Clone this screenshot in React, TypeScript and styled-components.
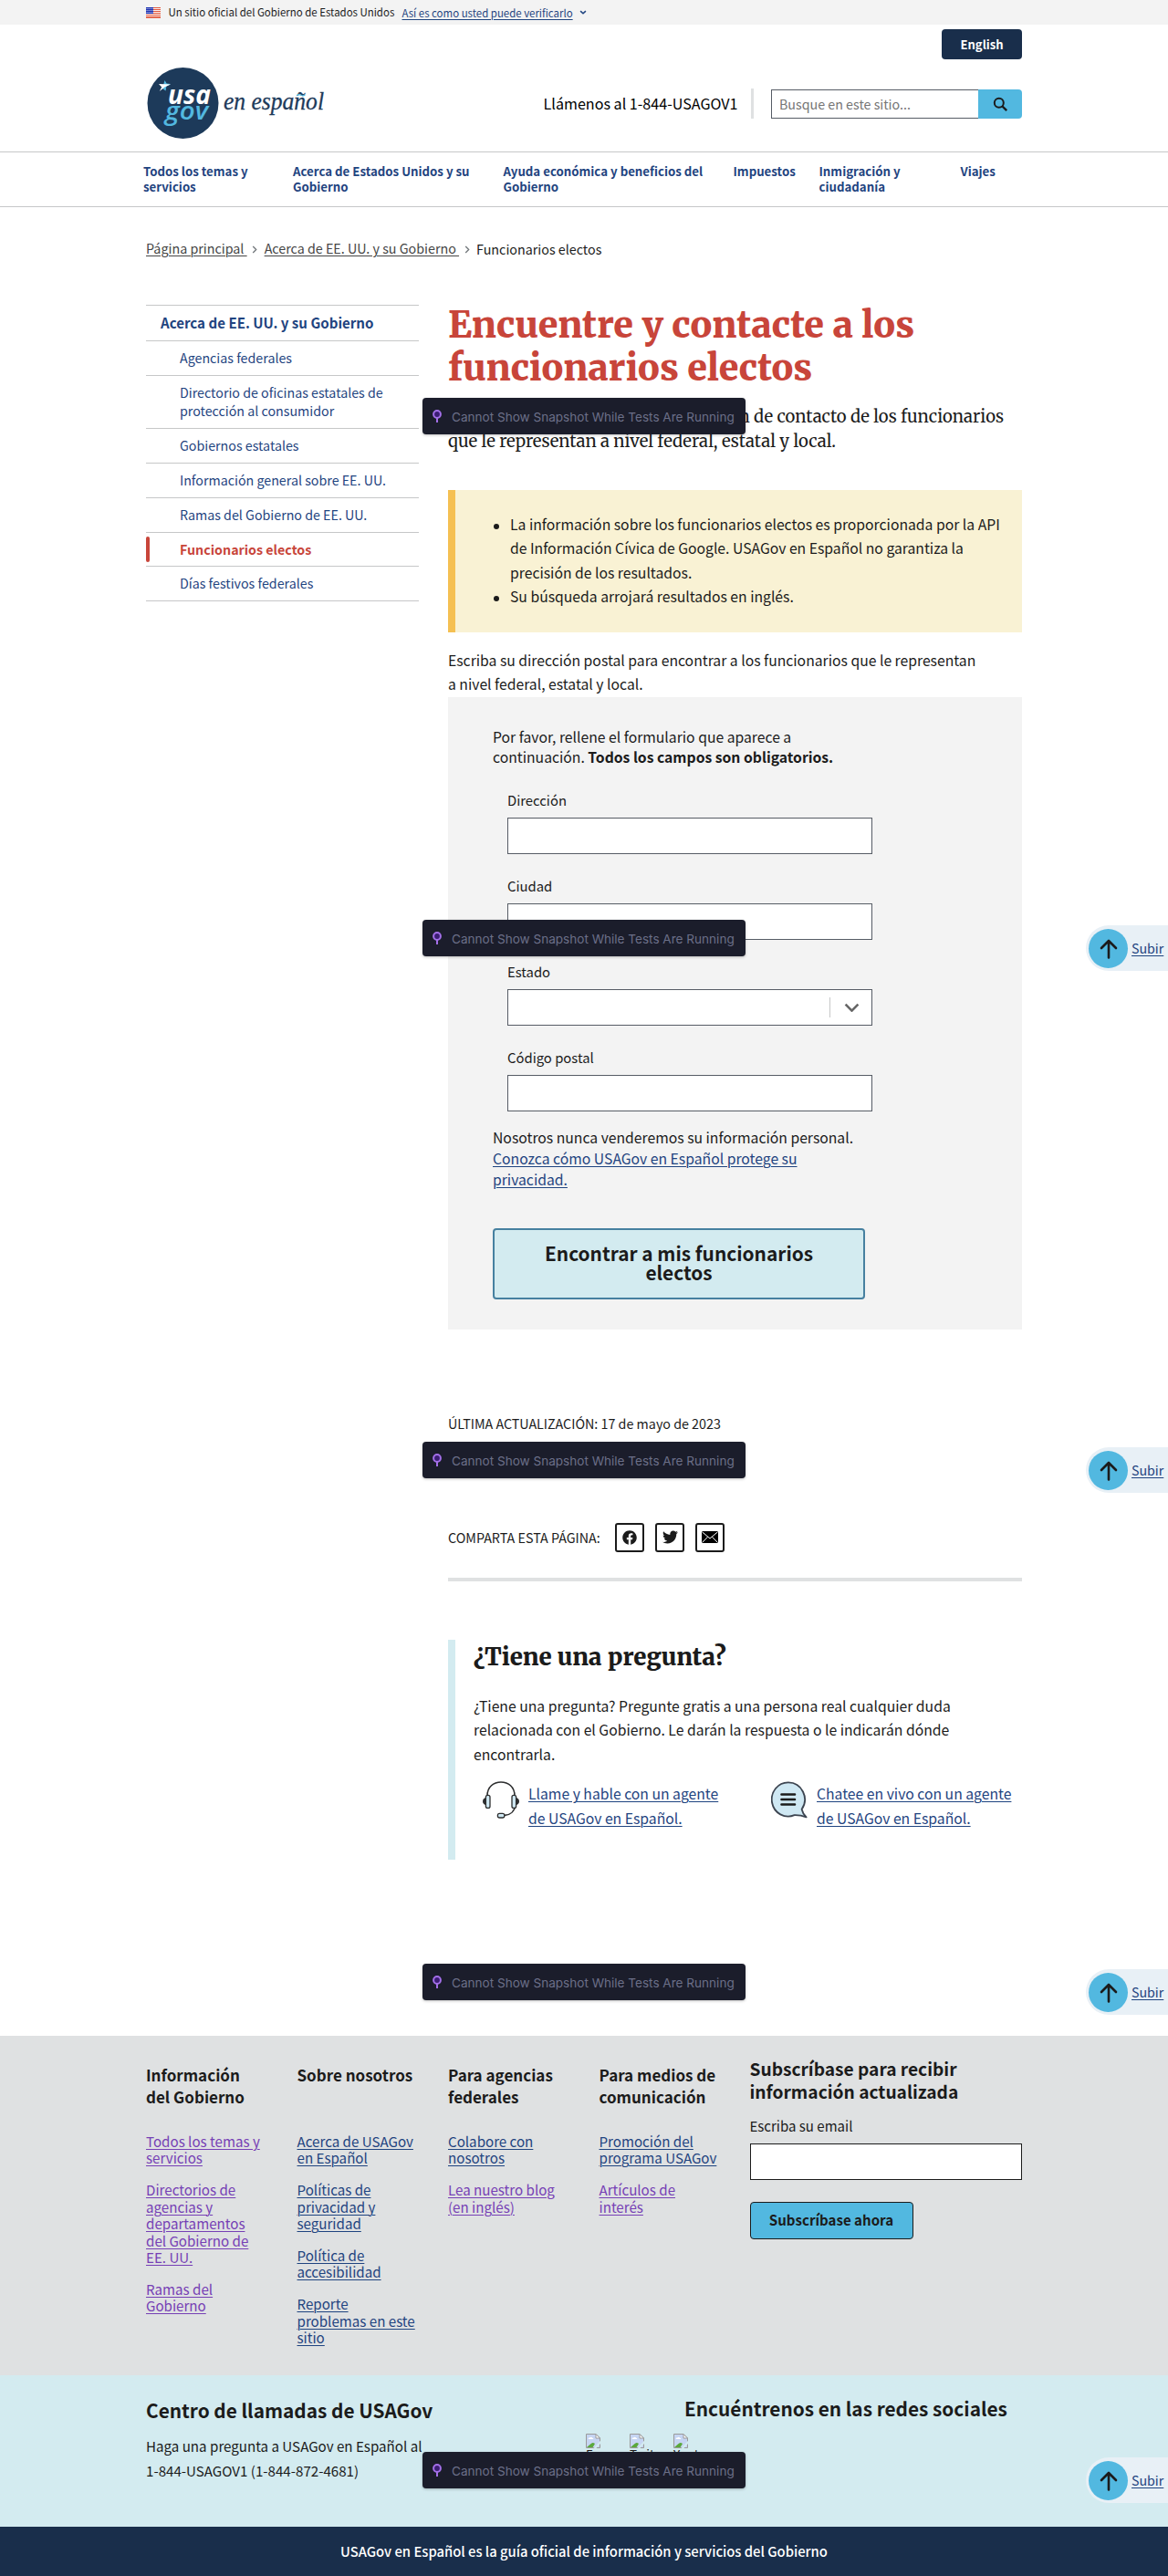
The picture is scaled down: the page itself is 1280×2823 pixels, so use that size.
import React from "react";
import styled, { createGlobalStyle, css } from "styled-components";
import { FaFacebook, FaTwitter } from "react-icons/fa";

const sans = `"Noto Sans CJK JP", "Noto Sans", sans-serif`;
const serif = `Merriweather, "DejaVu Serif Condensed", "DejaVu Serif", serif`;

const c = {
  ink: "#1b1b1b",
  link: "#1f4480",
  visited: "#7640b5",
  red: "#c8453a",
  navy: "#192e4b",
  cyan: "#52b8e0",
  teal: "#d3ebf0",
  line: "#c6c7c8",
  grey: "#dfe1e2",
  light: "#f3f3f3",
};

const GlobalStyle = createGlobalStyle`
  *, *::before, *::after { box-sizing: border-box; }
  body { margin: 0; background: #fff; color: ${c.ink}; font-family: ${sans}; font-size: 15.72px; line-height: 26.35px; }
  h1, h2, h3, p, ul { margin: 0; padding: 0; font-size: inherit; }
  a { color: ${c.link}; text-decoration-thickness: 1px; text-underline-offset: 2px; }
  svg { display: block; flex: none; }
`;

const Page = styled.div`
  position: relative;
  width: 1280px;
  height: 2823px;
  overflow: hidden;
`;

const Container = styled.div`
  width: 960px;
  margin: 0 auto;
`;

/* ---------- Banner ---------- */
const Banner = styled.div`
  height: 27px;
  background: ${c.light};
`;
const BannerInner = styled(Container)`
  display: flex;
  align-items: center;
  height: 27px;
  font-size: 11.45px;
  line-height: 26px;
  white-space: nowrap;
`;
const BannerText = styled.span`
  width: 248px;
  margin: 0 8px 1px 8.5px;
`;
const BannerLink = styled.a`
  margin: 1px 7px 0 0;
`;

/* ---------- Header ---------- */
const Header = styled.header`
  border-bottom: 1px solid ${c.line};
  height: 140px;
`;
const TopRow = styled(Container)`
  display: flex;
  justify-content: flex-end;
  padding-top: 5px;
`;
const LanguageButton = styled.a`
  width: 88px;
  height: 33px;
  border-radius: 4px;
  background: ${c.navy};
  color: #fff;
  font-weight: 700;
  font-size: 13.03px;
  line-height: 33px;
  text-align: center;
  text-decoration: none;
`;
const BrandRow = styled(Container)`
  display: flex;
  align-items: center;
  height: 96px;
`;
const Phone = styled.span`
  margin: 0 14.5px 0 auto;
  color: #000;
  font-size: 16.12px;
  line-height: 30px;
`;
const Divider = styled.span`
  width: 3px;
  height: 33px;
  margin-right: 19px;
  background: ${c.grey};
`;
const SearchField = styled.div`
  width: 227px;
  height: 32px;
  padding-left: 8px;
  margin-top: 2px;
  border: 1px solid #565c65;
  border-right: 0;
  color: #757575;
  font-size: 14.27px;
  line-height: 30px;
`;
const SearchButton = styled.div`
  display: flex;
  align-items: center;
  justify-content: center;
  width: 48px;
  height: 32px;
  margin-top: 2px;
  border-radius: 0 4px 4px 0;
  background: ${c.cyan};
`;

const Nav = styled.nav`
  display: grid;
  grid-template-columns: 164px 230.5px 252px 94px 155px 120px;
  height: 60px;
  padding: 12px 0 0 157px;
  border-bottom: 1px solid ${c.line};
`;
const NavLink = styled.a<{ $width: number }>`
  width: ${(p) => p.$width}px;
  font-size: 13.25px;
  line-height: 17px;
  font-weight: 700;
  text-decoration: none;
`;

const Crumbs = styled(Container)`
  display: flex;
  align-items: center;
  height: 24px;
  margin-top: 33px;
  font-size: 14.31px;
  line-height: 24px;
  white-space: pre;
`;
const CrumbLink = styled.a`
  color: #454545;
`;
const CrumbHere = styled.span`
  padding-top: 1px;
`;
const CrumbSep = styled.svg`
  margin: 2px 7px 0 5.5px;
`;

/* ---------- Body ---------- */
const Columns = styled(Container)`
  display: grid;
  grid-template-columns: 299px 629px;
  column-gap: 32px;
  align-items: start;
  height: 1947px;
`;

const SideNav = styled.ul`
  margin-top: 50px;
  list-style: none;
  border-bottom: 1px solid ${c.line};
`;
const SideItem = styled.li<{ $kind?: "head" | "active" }>`
  position: relative;
  padding: 8px 30px 9px 37px;
  border-top: 1px solid ${c.line};
  color: ${c.link};
  font-size: 14.26px;
  line-height: 20px;
  ${(p) =>
    p.$kind === "head" &&
    css`
      padding: 8px 0 10px 16px;
      font-size: 15.1px;
      font-weight: 700;
    `}
  ${(p) =>
    p.$kind === "active" &&
    css`
      padding: 8px 0 8px 37px;
      color: ${c.red};
      font-weight: 700;
      &::before {
        content: "";
        position: absolute;
        left: 0;
        top: 4px;
        width: 4px;
        height: 28px;
        border-radius: 2px;
        background: ${c.red};
      }
    `}
`;

const Main = styled.main`
  padding-top: 48.7px;
`;
const Title = styled.h1`
  color: ${c.red};
  font: 900 39.35px/47px ${serif};
  white-space: nowrap;
`;
const Intro = styled.p`
  width: 609px;
  margin-top: 16.5px;
  font: 400 18.48px/27px ${serif};
  white-space: nowrap;
`;
const IntroFirst = styled.span`
  display: flex;
  justify-content: flex-end;
`;
const Alert = styled.div`
  height: 156px;
  margin-top: 39.8px;
  padding: 25px 16px 0 60px;
  border-left: 8px solid #f5c052;
  background: #f9f2d4;
`;
const AlertList = styled.ul`
  padding-left: 0;
  list-style: none;
`;
const AlertItem = styled.li`
  display: flex;
  &::before {
    content: "";
    flex: none;
    width: 6px;
    height: 6px;
    margin: 12px 12px 0 -18px;
    border-radius: 50%;
    background: ${c.ink};
  }
`;
const Lead = styled.p`
  width: 590px;
  margin: 18px 0 0.3px;
`;

const FormBox = styled.form`
  height: 693px;
  padding: 33.5px 49px 0;
  background: ${c.light};
  line-height: 22px;
`;
const FormIntro = styled.p`
  width: 390px;
  margin-bottom: 26px;
`;
const Field = styled.div`
  height: 94px;
  margin-left: 16px;
`;
const Label = styled.label`
  display: block;
  margin-bottom: 8.5px;
  font-size: 14.84px;
  line-height: 20px;
`;
const Box = styled.div`
  display: flex;
  align-items: center;
  justify-content: flex-end;
  width: 400px;
  height: 40px;
  padding-right: 13px;
  border: 1px solid #565c65;
  background: #fff;
`;
const BoxRule = styled.span`
  width: 1px;
  height: 22px;
  margin-right: 15px;
  background: ${c.line};
`;
const Privacy = styled.p`
  width: 400px;
  margin: -8.5px 0 42px;
  line-height: 23px;
`;
const Submit = styled.div`
  width: 408px;
  height: 78px;
  padding: 15px 40px 0;
  border: 2px solid #4680a0;
  border-radius: 4px;
  background: ${c.teal};
  font-size: 20.85px;
  line-height: 21.5px;
  font-weight: 700;
  text-align: center;
`;
const Updated = styled.p`
  margin-top: 93.5px;
  font-size: 14.3px;
  line-height: 20px;
`;
const Share = styled.div`
  display: flex;
  align-items: center;
  gap: 12px;
  height: 32px;
  margin-top: 98.5px;
  font-size: 14.3px;
`;
const ShareLabel = styled.span`
  width: 171px;
  white-space: nowrap;
`;
const ShareIcon = styled.a`
  display: flex;
  align-items: center;
  justify-content: center;
  width: 32px;
  height: 32px;
  border: 2px solid ${c.ink};
  border-radius: 3px;
  color: ${c.ink};
`;
const Rule = styled.div`
  height: 4px;
  margin: 28px 0 64px;
  background: ${c.grey};
`;
const Question = styled.section`
  height: 241px;
  padding-left: 20px;
  border-left: 8px solid ${c.teal};
`;
const QuestionTitle = styled.h2`
  padding-top: 2px;
  margin-bottom: 24px;
  font: 900 25.7px/34px ${serif};
`;
const QuestionText = styled.p`
  width: 545px;
`;
const Contacts = styled.div`
  display: grid;
  grid-template-columns: 316px 1fr;
  padding: 16.4px 0 0 10px;
`;
const Contact = styled.div`
  display: flex;
  gap: 10px;
  line-height: 27px;
  white-space: nowrap;
`;

/* ---------- Footer ---------- */
const FooterTop = styled.footer`
  height: 372px;
  background: ${c.grey};
`;
const FooterGrid = styled(Container)`
  display: grid;
  grid-template-columns: 165.5px 165.5px 165.5px 165px 298.5px;
`;
const FooterColumn = styled.div`
  padding-top: 30.6px;
`;
const FooterHeading = styled.h3`
  width: 130px;
  height: 48px;
  margin-bottom: 27.4px;
  font-size: 17.03px;
  line-height: 24px;
`;
const FooterLink = styled.a<{ $visited?: boolean }>`
  display: block;
  width: 130.4px;
  margin-bottom: 16.2px;
  font-size: 15.14px;
  line-height: 18.5px;
  color: ${(p) => (p.$visited ? c.visited : c.link)};
`;
const Subscribe = styled.div`
  padding-top: 23.5px;
`;
const SubscribeTitle = styled.h3`
  width: 250px;
  font-size: 19.16px;
  line-height: 25.6px;
`;
const SubscribeLabel = styled.div`
  margin: 14.3px 0 9px;
  font-size: 15.03px;
  line-height: 20px;
`;
const SubscribeField = styled.div`
  height: 40px;
  border: 1px solid ${c.ink};
  background: #fff;
`;
const SubscribeButton = styled.div`
  width: 179px;
  height: 41px;
  margin-top: 24px;
  border: 1px solid ${c.ink};
  border-radius: 4px;
  background: ${c.cyan};
  font-size: 15.08px;
  line-height: 38px;
  font-weight: 700;
  text-align: center;
`;
const FooterMid = styled.div`
  height: 166px;
  background: ${c.teal};
`;
const MidGrid = styled(Container)`
  display: grid;
  grid-template-columns: 482px 478px;
`;
const CallCenter = styled.div`
  padding-top: 24px;
`;
const MidTitle = styled.h3`
  margin-bottom: 12px;
  font-size: 20.8px;
  line-height: 28px;
  white-space: nowrap;
`;
const MidText = styled.p`
  font-size: 15.13px;
  line-height: 26.8px;
`;
const Social = styled.div`
  padding-top: 22px;
`;
const SocialTitle = styled(MidTitle)`
  margin: 0 0 14px 108px;
`;
const SocialIcons = styled.div`
  display: flex;
  gap: 18px;
`;
const MissingImage = styled.div`
  width: 30px;
  font-size: 13.4px;
  line-height: 13px;
  word-break: break-all;
`;
const FooterBar = styled.div`
  height: 54px;
  background: ${c.navy};
  color: #fff;
  font-size: 14.79px;
  line-height: 54px;
  font-weight: 500;
  text-align: center;
`;

/* ---------- Floating layers ---------- */
const Toast = styled.div<{ $top: number }>`
  position: absolute;
  left: 463px;
  top: ${(p) => p.$top}px;
  display: flex;
  align-items: center;
  width: 354px;
  height: 40px;
  padding: 2px 0 0 11px;
  border-radius: 4px;
  background: #1b1d2b;
  box-shadow: 0 1px 3px rgba(0, 0, 0, 0.25);
  color: #6b6f88;
  font: 400 13.57px/20px Inter, sans-serif;
  white-space: nowrap;
  svg {
    margin: -3px 11px 0 0;
  }
`;
const BackTop = styled.div<{ $top: number }>`
  position: absolute;
  left: 1190px;
  top: ${(p) => p.$top}px;
  display: flex;
  align-items: center;
  width: 90px;
  height: 50px;
  padding-left: 3px;
  border-radius: 25px 0 0 25px;
  background: #e8f0f6;
  font-size: 14.21px;
`;
const BackTopDot = styled.span`
  display: flex;
  align-items: center;
  justify-content: center;
  width: 43px;
  height: 43px;
  margin: 1px 4px 0 0;
  border-radius: 50%;
  background: ${c.cyan};
`;

/* ---------- Drawings ---------- */
const Flag = () => (
  <svg width="16" height="12" viewBox="0 0 16 12">
    <rect width="16" height="12" fill="#fff" />
    {[0, 2, 4, 6, 8, 10].map((y) => (
      <rect key={y} y={y} width="16" height="1.1" fill="#db3e1f" opacity="0.85" />
    ))}
    <rect y="11.3" width="16" height="0.7" fill="#db3e1f" />
    <rect width="8" height="7" fill="#1e33b1" />
    {[1, 3, 5, 7].map((x) => [1, 3, 5].map((y) => <rect key={`${x}-${y}`} x={x - 0.4} y={y} width="0.9" height="0.9" fill="#fff" />))}
  </svg>
);

const Logo = () => (
  <svg width="200" height="80" viewBox="160 73 200 80">
    <circle cx="200.5" cy="113" r="39" fill="#1d3a5a" />
    <path d="M180.5 88 L182.6 91.6 L187 92 L182.4 94.6 L181.6 99.5 L178 97 Z" fill={c.cyan} />
    <path d="M174 92 L187 92.4 L180.4 95.4 L174.8 100 L177.2 95.4 Z" fill="#fff" />
    <text x="184" y="114" fontFamily="Open Sans, sans-serif" fontWeight="700" fontStyle="italic" fontSize="28.5" textLength="47" lengthAdjust="spacingAndGlyphs" fill="#fff">usa</text>
    <text x="181" y="131.3" fontFamily="Open Sans, sans-serif" fontWeight="600" fontStyle="italic" fontSize="27" textLength="47" lengthAdjust="spacingAndGlyphs" fill={c.cyan}>gov</text>
    <text x="245" y="120" fontFamily="Liberation Serif, serif" fontStyle="italic" fontSize="27" textLength="110" lengthAdjust="spacingAndGlyphs" fill="#1d3a5a" stroke="#1d3a5a" strokeWidth="0.3">en español</text>
    <path d="M325 104.8 q2.6 -2 5 -0.6 t4.4 -0.4" fill="none" stroke={c.cyan} strokeWidth="1.2" />
  </svg>
);

const Chevron = ({ w, stroke, color }: { w: number; stroke: number; color: string }) => (
  <svg width={w} height={w * 0.62} viewBox={`0 0 ${w} ${w * 0.62}`}>
    <path d={`M${stroke / 2 + 0.3} ${stroke / 2 + 0.3} L${w / 2} ${w * 0.62 - stroke * 0.75} L${w - stroke / 2 - 0.3} ${stroke / 2 + 0.3}`} fill="none" stroke={color} strokeWidth={stroke} />
  </svg>
);

const Separator = () => (
  <CrumbSep width="6.5" height="9" viewBox="0 0 6.5 9">
    <path d="M1.2 1 L4.7 4.5 L1.2 8" fill="none" stroke="#71767a" strokeWidth="1.3" />
  </CrumbSep>
);

const SearchIcon = () => (
  <svg width="17" height="17" viewBox="0 0 17 17">
    <circle cx="6.8" cy="6.8" r="5" fill="none" stroke={c.ink} strokeWidth="2" />
    <path d="M10.5 10.5 L15.2 15.2" stroke={c.ink} strokeWidth="2.4" />
  </svg>
);

const MailIcon = () => (
  <svg width="18" height="13" viewBox="0 0 18 13">
    <rect width="18" height="13" rx="1" fill="#000" />
    <path d="M0.5 0.8 L9 8 L17.5 0.8 M0.6 12.4 L6.6 6.2 M17.4 12.4 L11.4 6.2" fill="none" stroke="#fff" strokeWidth="1" />
  </svg>
);

const Headset = () => (
  <svg width="40" height="41" viewBox="0 0 40 41">
    <path d="M5 16 C5 6 12 1 20 1 S35 6 35 16" fill="none" stroke="#2d2e2f" strokeWidth="1.6" />
    <path d="M36 26 C35 33 30 37 24 37.4" fill="none" stroke="#2d2e2f" strokeWidth="1.6" />
    <path d="M3.2 18 Q0 19 0 22 T3.2 26 Z M36.8 18 Q40 19 40 22 T36.8 26 Z" fill="#2d2e2f" />
    <rect x="3.4" y="15.4" width="4.6" height="14" rx="2" fill="#cfe8f3" stroke="#2d2e2f" strokeWidth="1.3" />
    <rect x="32" y="15.4" width="4.6" height="14" rx="2" fill="#cfe8f3" stroke="#2d2e2f" strokeWidth="1.3" />
    <rect x="16.4" y="35.4" width="7.4" height="4.6" rx="2" fill="#cfe8f3" stroke="#2d2e2f" strokeWidth="1.3" />
  </svg>
);

const Chat = () => (
  <svg width="40" height="41" viewBox="0 0 40 41">
    <path d="M19 1.4 A18 18.6 0 1 0 25.6 37.2 Q32 37 38.6 39.4 Q34.6 35.4 33.6 30.8 A18 18.6 0 0 0 19 1.4 Z" fill="#cfe8f3" stroke="#3d4551" strokeWidth="1.8" strokeLinejoin="round" />
    <path d="M11.5 14.5 H26 M11.5 20 H26 M11.5 25.5 H26" stroke={c.ink} strokeWidth="2.6" strokeLinecap="round" />
  </svg>
);

const BrokenImage = () => (
  <svg width="16" height="16" viewBox="0 0 16 16">
    <path d="M0.5 0.5 H11 L15.5 5 V15.5 H0.5 Z" fill="#c6d5f3" stroke="#9a9a9a" />
    <path d="M2.5 6 q0.5 -2 2 -1.6 q1.6 -1.6 2.6 0.4 q1.4 0 1.2 1.2 Z" fill="#fff" />
    <path d="M1 15 L5 11.4 Q7.5 8.6 10 11 L7.6 15 Z" fill="#5aa83c" />
    <path d="M16 7.8 L8.6 16 H11.4 L16 11 Z" fill={c.teal} />
    <path d="M11 0.5 V5 H15.5 Z" fill="#fff" stroke="#9a9a9a" />
  </svg>
);

const Pin = () => (
  <svg width="10" height="14" viewBox="0 0 10 14">
    <circle cx="5" cy="5" r="3.9" fill="#3b1d73" stroke="#a36fe8" strokeWidth="2" />
    <path d="M5 9 V14" stroke="#a36fe8" strokeWidth="2" />
  </svg>
);

const ArrowUp = () => (
  <svg width="20" height="22" viewBox="0 0 20 22">
    <path d="M10 20.5 V2 M2 10 L10 2 L18 10" fill="none" stroke={c.ink} strokeWidth="2.6" strokeLinecap="round" strokeLinejoin="round" />
  </svg>
);

/* ---------- Data ---------- */
const navItems: [string, number][] = [
  ["Todos los temas y servicios", 130],
  ["Acerca de Estados Unidos y su Gobierno", 205],
  ["Ayuda económica y beneficios del Gobierno", 226],
  ["Impuestos", 80],
  ["Inmigración y ciudadanía", 110],
  ["Viajes", 60],
];

const footerColumns: { title: string; links: [string, boolean][] }[] = [
  {
    title: "Información del Gobierno",
    links: [
      ["Todos los temas y servicios", true],
      ["Directorios de agencias y departamentos del Gobierno de EE. UU.", true],
      ["Ramas del Gobierno", true],
    ],
  },
  {
    title: "Sobre nosotros",
    links: [
      ["Acerca de USAGov en Español", false],
      ["Políticas de privacidad y seguridad", false],
      ["Política de accesibilidad", false],
      ["Reporte problemas en este sitio", false],
    ],
  },
  {
    title: "Para agencias federales",
    links: [
      ["Colabore con nosotros", false],
      ["Lea nuestro blog (en inglés)", true],
    ],
  },
  {
    title: "Para medios de comunicación",
    links: [
      ["Promoción del programa USAGov", false],
      ["Artículos de interés", true],
    ],
  },
];

export default function App() {
  return (
    <Page>
      <GlobalStyle />
      <Banner>
        <BannerInner>
          <Flag />
          <BannerText>Un sitio oficial del Gobierno de Estados Unidos</BannerText>
          <BannerLink href="#">Así es como usted puede verificarlo</BannerLink>
          <Chevron w={8} stroke={1.6} color={c.link} />
        </BannerInner>
      </Banner>

      <Header>
        <TopRow>
          <LanguageButton href="#">English</LanguageButton>
        </TopRow>
        <BrandRow>
          <Logo />
          <Phone>Llámenos al 1-844-USAGOV1</Phone>
          <Divider />
          <SearchField>Busque en este sitio...</SearchField>
          <SearchButton>
            <SearchIcon />
          </SearchButton>
        </BrandRow>
      </Header>
      <Nav>
        {navItems.map(([label, width]) => (
          <NavLink key={label} href="#" $width={width}>
            {label}
          </NavLink>
        ))}
      </Nav>

      <Crumbs>
        <CrumbLink href="#">{"Página principal "}</CrumbLink>
        <Separator />
        <CrumbLink href="#">{"Acerca de EE. UU. y su Gobierno "}</CrumbLink>
        <Separator />
        <CrumbHere>Funcionarios electos</CrumbHere>
      </Crumbs>

      <Columns>
        <SideNav>
          <SideItem $kind="head">Acerca de EE. UU. y su Gobierno</SideItem>
          <SideItem>Agencias federales</SideItem>
          <SideItem>Directorio de oficinas estatales de protección al consumidor</SideItem>
          <SideItem>Gobiernos estatales</SideItem>
          <SideItem>Información general sobre EE. UU.</SideItem>
          <SideItem>Ramas del Gobierno de EE. UU.</SideItem>
          <SideItem $kind="active">Funcionarios electos</SideItem>
          <SideItem>Días festivos federales</SideItem>
        </SideNav>

        <Main>
          <Title>
            Encuentre y contacte a los
            <br />
            funcionarios electos
          </Title>
          <Intro>
            <IntroFirst>Obtenga los nombres e información de contacto de los funcionarios</IntroFirst>
            que le representan a nivel federal, estatal y local.
          </Intro>
          <Alert>
            <AlertList>
              <AlertItem>
                La información sobre los funcionarios electos es proporcionada por la API de Información Cívica de
                Google. USAGov en Español no garantiza la precisión de los resultados.
              </AlertItem>
              <AlertItem>Su búsqueda arrojará resultados en inglés.</AlertItem>
            </AlertList>
          </Alert>
          <Lead>
            Escriba su dirección postal para encontrar a los funcionarios que le representan a nivel federal, estatal y
            local.
          </Lead>
          <FormBox>
            <FormIntro>
              Por favor, rellene el formulario que aparece a continuación. <b>Todos los campos son obligatorios.</b>
            </FormIntro>
            <Field>
              <Label>Dirección</Label>
              <Box />
            </Field>
            <Field>
              <Label>Ciudad</Label>
              <Box />
            </Field>
            <Field>
              <Label>Estado</Label>
              <Box>
                <BoxRule />
                <Chevron w={17} stroke={2.6} color="#666" />
              </Box>
            </Field>
            <Field>
              <Label>Código postal</Label>
              <Box />
            </Field>
            <Privacy>
              Nosotros nunca venderemos su información personal.{" "}
              <a href="#">
                Conozca cómo USAGov en Español protege su
                <br />
                privacidad.
              </a>
            </Privacy>
            <Submit>Encontrar a mis funcionarios electos</Submit>
          </FormBox>

          <Updated>ÚLTIMA ACTUALIZACIÓN: 17 de mayo de 2023</Updated>
          <Share>
            <ShareLabel>COMPARTA ESTA PÁGINA:</ShareLabel>
            <ShareIcon>
              <FaFacebook size={16} />
            </ShareIcon>
            <ShareIcon>
              <FaTwitter size={17} />
            </ShareIcon>
            <ShareIcon>
              <MailIcon />
            </ShareIcon>
          </Share>
          <Rule />
          <Question>
            <QuestionTitle>¿Tiene una pregunta?</QuestionTitle>
            <QuestionText>
              ¿Tiene una pregunta? Pregunte gratis a una persona real cualquier duda relacionada con el Gobierno. Le
              darán la respuesta o le indicarán dónde encontrarla.
            </QuestionText>
            <Contacts>
              <Contact>
                <Headset />
                <a href="#">
                  Llame y hable con un agente
                  <br />
                  de USAGov en Español.
                </a>
              </Contact>
              <Contact>
                <Chat />
                <a href="#">
                  Chatee en vivo con un agente
                  <br />
                  de USAGov en Español.
                </a>
              </Contact>
            </Contacts>
          </Question>
        </Main>
      </Columns>

      <FooterTop>
        <FooterGrid>
          {footerColumns.map((col) => (
            <FooterColumn key={col.title}>
              <FooterHeading>{col.title}</FooterHeading>
              {col.links.map(([label, visited]) => (
                <FooterLink key={label} href="#" $visited={visited}>
                  {label}
                </FooterLink>
              ))}
            </FooterColumn>
          ))}
          <Subscribe>
            <SubscribeTitle>Subscríbase para recibir información actualizada</SubscribeTitle>
            <SubscribeLabel>Escriba su email</SubscribeLabel>
            <SubscribeField />
            <SubscribeButton>Subscríbase ahora</SubscribeButton>
          </Subscribe>
        </FooterGrid>
      </FooterTop>
      <FooterMid>
        <MidGrid>
          <CallCenter>
            <MidTitle>Centro de llamadas de USAGov</MidTitle>
            <MidText>
              Haga una pregunta a USAGov en Español al
              <br />
              1-844-USAGOV1 (1-844-872-4681)
            </MidText>
          </CallCenter>
          <Social>
            <SocialTitle>Encuéntrenos en las redes sociales</SocialTitle>
            <SocialIcons>
              {["Facebook", "Twitter", "Youtube"].map((name) => (
                <MissingImage key={name}>
                  <BrokenImage />
                  {name}
                </MissingImage>
              ))}
            </SocialIcons>
          </Social>
        </MidGrid>
      </FooterMid>
      <FooterBar>USAGov en Español es la guía oficial de información y servicios del Gobierno</FooterBar>

      {[436, 1008, 1580, 2152, 2687].map((top) => (
        <Toast key={top} $top={top}>
          <Pin />
          Cannot Show Snapshot While Tests Are Running
        </Toast>
      ))}
      {[1014, 1586, 2158, 2693].map((top) => (
        <BackTop key={top} $top={top}>
          <BackTopDot>
            <ArrowUp />
          </BackTopDot>
          <a href="#">Subir</a>
        </BackTop>
      ))}
    </Page>
  );
}
